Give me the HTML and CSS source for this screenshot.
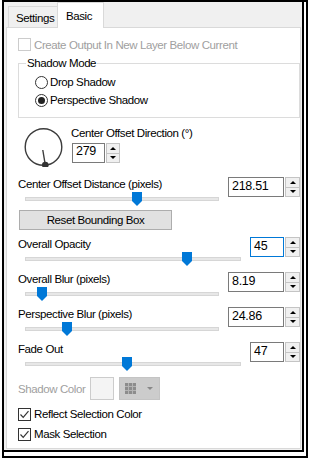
FILE: index.html
```html
<!DOCTYPE html>
<html>
<head>
<meta charset="utf-8">
<link rel="stylesheet" href="styles.css">
</head>
<body>
<div class="outer">
  <div class="dialog">
    <div class="tabs">
      <div class="tab">Settings</div>
      <div class="tab active">Basic</div>
    </div>
    <div class="page">
      <div class="check disabled top-check"><span class="box"></span><span>Create Output In New Layer Below Current</span></div>

      <fieldset class="group">
        <legend>Shadow Mode</legend>
        <div class="radio first"><span class="circle"></span><span>Drop Shadow</span></div>
        <div class="radio second checked"><span class="circle"></span><span>Perspective Shadow</span></div>
      </fieldset>

      <div class="dial-row">
        <svg class="dial" width="40" height="40" viewBox="0 0 40 40">
          <circle cx="19.5" cy="20" r="18.3" fill="none" stroke="#3c3c3c" stroke-width="1.4"/>
          <line x1="18.8" y1="23" x2="21.3" y2="38" stroke="#3c3c3c" stroke-width="1.4"/>
          <circle cx="21.3" cy="38" r="3.3" fill="#333"/>
        </svg>
        <div class="dial-side">
          <div class="label">Center Offset Direction (°)</div>
          <div class="spin dial-spin">
            <div class="field">279</div>
            <div class="btns"><span class="up"></span><span class="down"></span></div>
          </div>
        </div>
      </div>

      <div class="block first-block">
        <div class="left">
          <div class="label">Center Offset Distance (pixels)</div>
          <div class="slider"><div class="track"></div><span class="thumb" style="left:107px"></span></div>
        </div>
        <div class="spin wide">
          <div class="field">218.51</div>
          <div class="btns"><span class="up"></span><span class="down"></span></div>
        </div>
      </div>

      <div class="button">Reset Bounding Box</div>

      <div class="block">
        <div class="left">
          <div class="label">Overall Opacity</div>
          <div class="slider"><div class="track"></div><span class="thumb" style="left:157px"></span></div>
        </div>
        <div class="spin narrow focused">
          <div class="field">45</div>
          <div class="btns"><span class="up"></span><span class="down"></span></div>
        </div>
      </div>

      <div class="block">
        <div class="left">
          <div class="label">Overall Blur (pixels)</div>
          <div class="slider"><div class="track"></div><span class="thumb" style="left:12px"></span></div>
        </div>
        <div class="spin wide">
          <div class="field">8.19</div>
          <div class="btns"><span class="up"></span><span class="down"></span></div>
        </div>
      </div>

      <div class="block">
        <div class="left">
          <div class="label">Perspective Blur (pixels)</div>
          <div class="slider"><div class="track"></div><span class="thumb" style="left:37px"></span></div>
        </div>
        <div class="spin wide">
          <div class="field">24.86</div>
          <div class="btns"><span class="up"></span><span class="down"></span></div>
        </div>
      </div>

      <div class="block">
        <div class="left">
          <div class="label">Fade Out</div>
          <div class="slider"><div class="track"></div><span class="thumb" style="left:97px"></span></div>
        </div>
        <div class="spin narrow">
          <div class="field">47</div>
          <div class="btns"><span class="up"></span><span class="down"></span></div>
        </div>
      </div>

      <div class="color-row">
        <span class="color-label">Shadow Color</span>
        <span class="swatch"></span>
        <span class="picker">
          <svg class="grid-icon" width="11" height="11" viewBox="0 0 11 11">
            <rect x="0" y="0" width="11" height="11" fill="#8c8c8c"/>
            <rect x="3" y="0" width="1" height="11" fill="#b4b4b4"/>
            <rect x="7" y="0" width="1" height="11" fill="#b4b4b4"/>
            <rect x="0" y="3" width="11" height="1" fill="#b4b4b4"/>
            <rect x="0" y="7" width="11" height="1" fill="#b4b4b4"/>
          </svg>
          <span class="caret"></span>
        </span>
      </div>

      <div class="check checked row-reflect"><span class="box"><svg width="11" height="11" viewBox="0 0 11 11"><polyline points="1.5,5.5 4.2,8.3 9.5,2.2" fill="none" stroke="#333" stroke-width="1.2"/></svg></span><span>Reflect Selection Color</span></div>
      <div class="check checked row-mask"><span class="box"><svg width="11" height="11" viewBox="0 0 11 11"><polyline points="1.5,5.5 4.2,8.3 9.5,2.2" fill="none" stroke="#333" stroke-width="1.2"/></svg></span><span>Mask Selection</span></div>
    </div>
  </div>
</div>
</body>
</html>
```

FILE: styles.css
```css
* { box-sizing: border-box; }
html, body { margin: 0; padding: 0; background: #fff; }
body {
  font-family: "Liberation Sans", Arial, sans-serif;
  font-size: 11.5px;
  letter-spacing: -0.4px;
  color: #000;
}

.outer {
  margin-left: 2px;
  width: 306px;
  height: 458px;
  border: 2px solid #000;
}

.dialog {
  width: 300px;
  height: 450px;
  border-right: 2px solid #000;
  border-bottom: 2px solid #000;
  background: #f0f0f0;
  padding: 0 1px 1px 2px;
  display: flex;
  flex-direction: column;
}

.tabs {
  flex: none;
  height: 25px;
  display: flex;
  align-items: flex-end;
  padding-left: 2px;
}
.tab {
  height: 21px;
  width: 50px;
  border: 1px solid #d9d9d9;
  border-bottom: none;
  background: #f0f0f0;
  padding: 4px 0 0 7px;
  line-height: 14px;
}
.tab.active {
  position: relative;
  z-index: 1;
  height: 26px;
  width: 47px;
  margin-left: -1px;
  margin-bottom: -1px;
  background: #fff;
  padding: 6px 0 0 8px;
}

.page {
  flex: 1;
  background: #fff;
  border: 1px solid #d9d9d9;
  padding: 0 0 0 11px;
  display: flex;
  flex-direction: column;
}

/* checkboxes */
.check {
  display: flex;
  align-items: center;
  height: 14px;
  line-height: 14px;
}
.check .box {
  width: 13px;
  height: 13px;
  border: 1px solid #333;
  background: #fff;
  margin-right: 3px;
  display: flex;
  align-items: center;
  justify-content: center;
  flex: none;
}
.check.disabled { color: #a0a0a0; }
.check.disabled .box { border-color: #cccccc; }
.top-check { margin-top: 10px; height: 13px; }
.row-reflect { margin-top: 7px; }
.row-mask { margin-top: 6px; }

/* group */
.group {
  margin: 6px 0 0 0;
  padding: 0 0 10px 7px;
  border: 1px solid #dcdcdc;
  min-width: 0;
}
.group legend {
  padding: 0 1px;
  line-height: 13px;
}
.radio {
  display: flex;
  align-items: center;
  height: 13px;
  line-height: 13px;
  margin-left: 9px;
}
.radio.first { margin-top: 6px; }
.radio.second { margin-top: 5px; }
.radio .circle {
  width: 13px;
  height: 13px;
  border: 1px solid #333;
  border-radius: 50%;
  margin-right: 2px;
  display: flex;
  align-items: center;
  justify-content: center;
  flex: none;
}
.radio.checked .circle::after {
  content: "";
  width: 7px;
  height: 7px;
  border-radius: 50%;
  background: #222;
}

/* dial */
.dial-row {
  display: flex;
  margin-top: 9px;
  height: 40px;
}
.dial { margin-left: 6px; flex: none; }
.dial-side { margin-left: 7px; }
.dial-side .label { line-height: 13px; }
.dial-spin { margin-top: 3px; margin-left: 1px; height: 18px; }

/* spin boxes */
.spin {
  display: flex;
  height: 20px;
  flex: none;
}
.spin .field {
  border: 1px solid #7a7a7a;
  box-shadow: inset 0 0 0 1px #fff;
  background: #fff;
  padding-left: 3px;
  line-height: 17px;
  font-size: 12.5px;
  letter-spacing: -0.3px;
}
.spin.wide .field { width: 56px; }
.spin.narrow .field { width: 34px; }
.dial-spin .field { width: 33px; line-height: 15px; }
.spin.focused .field { border-color: #0078d7; }
.spin .btns {
  margin-left: 1px;
  width: 15px;
  border: 1px solid #c4c4c4;
  background: #f0f0f0;
  display: flex;
  flex-direction: column;
}
.dial-spin .btns { width: 14px; }
.btns span {
  flex: 1;
  display: flex;
  align-items: center;
  justify-content: center;
}
.btns .up { border-bottom: 1px solid #c4c4c4; }
.btns .up::after {
  content: "";
  border-left: 3px solid transparent;
  border-right: 3px solid transparent;
  border-bottom: 3px solid #000;
}
.btns .down::after {
  content: "";
  border-left: 3px solid transparent;
  border-right: 3px solid transparent;
  border-top: 3px solid #000;
}

/* slider blocks */
.block {
  display: flex;
  margin-top: 7px;
  height: 28px;
}
.block.first-block { margin-top: 10px; }
.block .left { flex: 1; min-width: 0; }
.block .label { line-height: 14px; height: 14px; white-space: nowrap; }
.slider {
  position: relative;
  height: 14px;
  margin: 0 9px 0 7px;
  padding-top: 6px;
}
.track {
  height: 4px;
  background: #e7e7e7;
  border: 1px solid #d6d6d6;
}
.thumb {
  position: absolute;
  top: 1px;
  width: 10px;
  height: 14px;
  background: #0078d7;
  clip-path: polygon(0 0, 100% 0, 100% 64%, 50% 100%, 0 64%);
}

.button {
  margin: 5px 0 0 1px;
  width: 153px;
  height: 20px;
  background: #e1e1e1;
  border: 1px solid #adadad;
  text-align: center;
  line-height: 18px;
}

/* color row */
.color-row {
  display: flex;
  align-items: center;
  margin-top: 7px;
  height: 23px;
}
.color-label { width: 72px; color: #a0a0a0; }
.swatch {
  width: 24px;
  height: 23px;
  border: 1px solid #cccccc;
  background: #f4f4f4;
}
.picker {
  margin-left: 5px;
  width: 41px;
  height: 23px;
  background: #cccccc;
  border: 1px solid #c4c4c4;
  display: flex;
  align-items: center;
}
.grid-icon { margin-left: 5px; }
.caret {
  margin-left: auto;
  margin-right: 6px;
  border-left: 3px solid transparent;
  border-right: 3px solid transparent;
  border-top: 3px solid #888;
}
```
